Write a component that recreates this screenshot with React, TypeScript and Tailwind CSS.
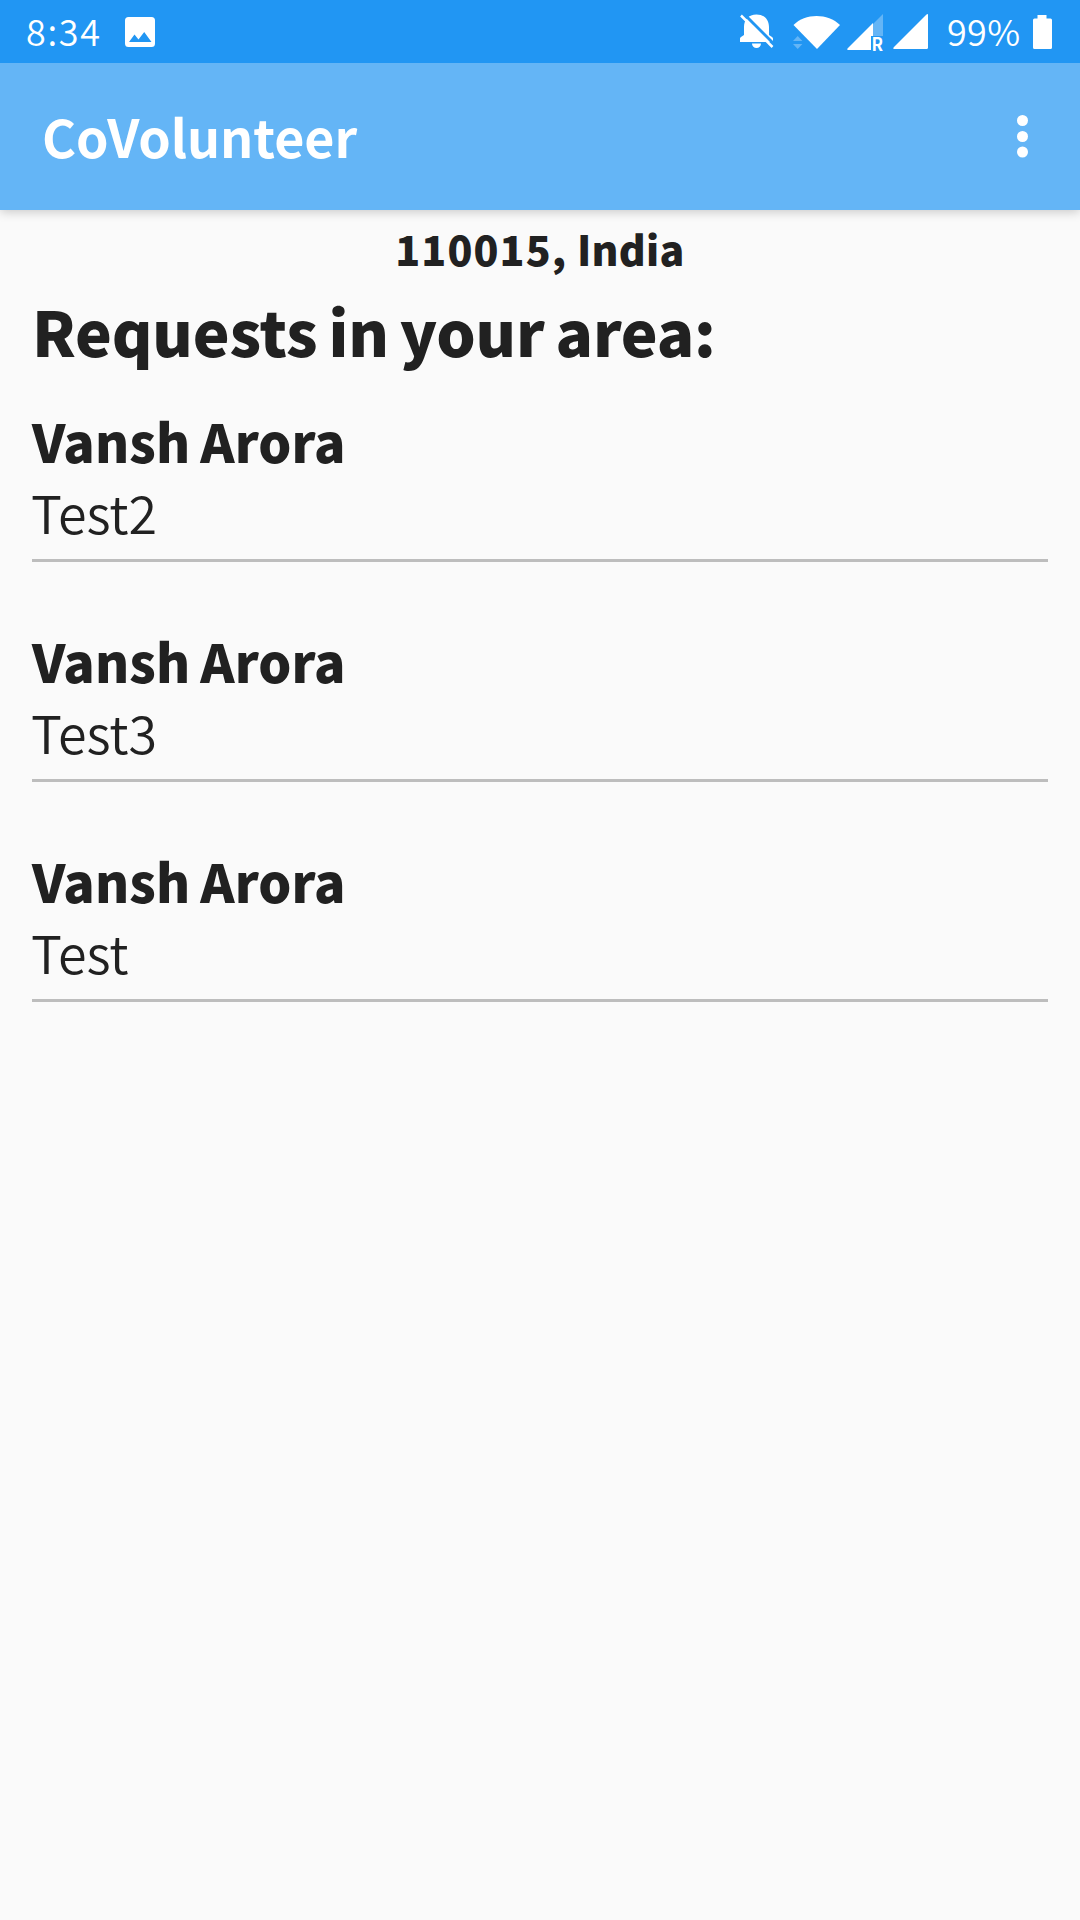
const requests = [
  { id: 1, name: "Vansh Arora", description: "Test2" },
  { id: 2, name: "Vansh Arora", description: "Test3" },
  { id: 3, name: "Vansh Arora", description: "Test" },
];

function StatusBar() {
  return (
    <div className="relative z-10 flex h-[63px] items-center bg-[#2196f3] pr-7 pl-[26px] text-white">
      <span className="w-[99px] pb-1 text-[36px] leading-none font-[350] tracking-[1.7px]">
        8:34
      </span>
      <svg className="h-[30px] w-[30px]" viewBox="0 0 30 30" fill="currentColor">
        <path
          fillRule="evenodd"
          d="M3.5 0h23A3.5 3.5 0 0 1 30 3.5v23a3.5 3.5 0 0 1-3.5 3.5h-23A3.5 3.5 0 0 1 0 26.5v-23A3.5 3.5 0 0 1 3.5 0zM4 25h22.500l-7.300-10-5.700 7.500-4-5z"
        />
      </svg>
      <div className="ml-auto flex items-center">
        <svg
          className="mb-0.5 h-9 w-9 overflow-visible"
          viewBox="0 0 36 36"
          fill="currentColor"
        >
          <path d="M1 29v-3.500q0-1 1-1.500l3-2v-8C5 7 9.500 1.500 17.500 1.500S30 7 30 14v8l3 2q1 .5 1 1.500V29z" />
          <path d="M13 30.500h9a4.500 4.500 0 0 1-9 0z" />
          <path d="M4.500 .5l32 32" stroke="#2196f3" strokeWidth="3" />
          <path d="M2 2.500l31.500 31.500" stroke="currentColor" strokeWidth="2.500" />
        </svg>
        <svg
          className="ml-[18px] h-9 w-12"
          viewBox="0 0 48 36"
          fill="currentColor"
        >
          <path d="M0.500 11C12-1 35-1 47 11L24 35z" />
          <path
            d="M0 27l4.700-5 4.700 5zM0 30h9.400l-4.700 5z"
            fill="#64b5f6"
          />
        </svg>
        <svg
          className="ml-1.5 h-[38px] w-[37px] overflow-visible"
          viewBox="0 0 37 38"
          fill="currentColor"
        >
          <path d="M36 1v22H26V11z" fill="#64b5f6" />
          <path d="M26 10v13h-2v14H1q-1.500-.5-.5-1.500z" />
          <text
            x="24.500"
            y="37.500"
            fontSize="18"
            fontWeight="700"
            textLength="11.500"
            lengthAdjust="spacingAndGlyphs"
          >
            R
          </text>
        </svg>
        <svg
          className="ml-[9px] h-[35px] w-[35px]"
          viewBox="0 0 35 35"
          fill="currentColor"
        >
          <path d="M35 1v32.500q0 1.500-1.500 1.500H1Q-.5 34.500 1 33L33 1Q35-1 35 1z" />
        </svg>
        <span className="ml-[19px] w-[73px] pb-1 text-[36px] leading-none font-[350] tracking-[0.3px]">
          99%
        </span>
        <svg
          className="ml-3 h-[34px] w-5"
          viewBox="0 0 20 34"
          fill="currentColor"
        >
          <path d="M5.500 0h9v3.500h4q1.500 0 1.500 1.500v27.500q0 1.500-1.500 1.500H2.500q-1.500 0-1.500-1.500V5q0-1.500 1.500-1.500h3z" />
        </svg>
      </div>
    </div>
  );
}

function AppBar() {
  return (
    <header className="flex h-[147px] items-center justify-between bg-[#64b5f6] pr-[52px] pl-[42px] text-white shadow-[0_2px_10px_rgba(0,0,0,0.2)]">
      <h1 className="pb-0.5 text-[52px] leading-none font-bold tracking-[-0.1px]">
        CoVolunteer
      </h1>
      <button type="button" aria-label="Menu">
        <svg
          className="h-[43px] w-[11px]"
          viewBox="0 0 11 43"
          fill="currentColor"
        >
          <circle cx="5.500" cy="5.500" r="5.500" />
          <circle cx="5.500" cy="21.500" r="5.500" />
          <circle cx="5.500" cy="37" r="5.500" />
        </svg>
      </button>
    </header>
  );
}

export default function App() {
  return (
    <div className="min-h-screen w-full bg-[#fafafa] font-['Noto_Sans_CJK_SC',sans-serif] text-[#212121]">
      <StatusBar />
      <AppBar />
      <main className="px-8 pt-2.5">
        <p className="text-center text-[41px] leading-14 font-black tracking-[0.3px]">
          <span className="tracking-[1.1px]">110015,</span> India
        </p>
        <h2 className="mt-3.5 text-[62px] leading-20 font-black tracking-[-0.2px] [word-spacing:-3px]">
          Requests in your area:
        </h2>
        <ul className="mt-[39px] flex flex-col gap-[67px]">
          {requests.map((request) => (
            <li
              key={request.id}
              className="border-b-3 border-[#bdbdbd] pb-2 text-[52px]"
            >
              <h3 className="leading-16 font-black tracking-[0.1px] [word-spacing:-2px]">
                {request.name}
              </h3>
              <p className="-ml-px leading-[78px] font-[350] tracking-[-0.1px]">
                {request.description}
              </p>
            </li>
          ))}
        </ul>
      </main>
    </div>
  );
}
